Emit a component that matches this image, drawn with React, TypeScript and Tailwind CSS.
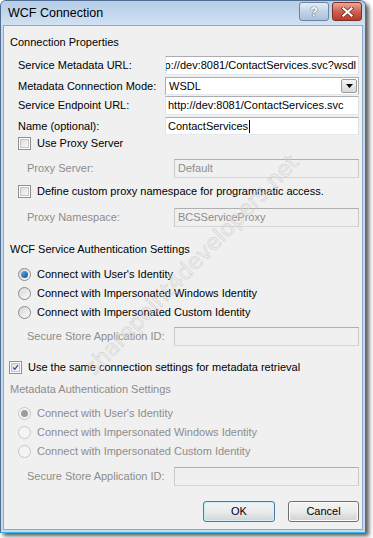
import React from "react";

function Checkbox({ checked = false }: { checked?: boolean }) {
  return (
    <div className="w-[13px] h-[13px] border border-[#8f8f8f] bg-white p-[1px] shrink-0">
      <div className="w-full h-full border border-[#c4c4c4] bg-gradient-to-br from-[#dcdcdc] to-[#fbfbfb] relative">
        {checked && (
          <svg viewBox="0 0 9 9" className="absolute inset-0 w-full h-full">
            <path d="M1.5 4.5 L3.6 6.8 L7.6 1.5" stroke="#2b4fa3" strokeWidth="1.6" fill="none" />
          </svg>
        )}
      </div>
    </div>
  );
}

function Radio({ checked = false, disabled = false }: { checked?: boolean; disabled?: boolean }) {
  return (
    <div
      className={
        "w-[13px] h-[13px] rounded-full border shrink-0 flex items-center justify-center " +
        (disabled ? "border-[#c8c8c8] bg-[#f4f4f4]" : "border-[#8a8a8a] bg-gradient-to-br from-[#d6d6d6] to-[#fcfcfc]")
      }
    >
      {checked && (
        <div
          className={
            "w-[7px] h-[7px] rounded-full " +
            (disabled ? "bg-[#9c9c9c]" : "bg-gradient-to-br from-[#63b6f2] to-[#0d4a8a]")
          }
        />
      )}
    </div>
  );
}

function TextBox({ children, width, height = 19 }: { children?: React.ReactNode; width: number; height?: number }) {
  return (
    <div
      className="bg-white border border-[#abadb3] border-l-[#e2e3ea] border-r-[#dbdfe6] border-b-[#e3e9ef] flex items-center overflow-hidden whitespace-nowrap shrink-0"
      style={{ width, height }}
    >
      {children}
    </div>
  );
}

function DisabledBox({ children, height = 19 }: { children?: React.ReactNode; height?: number }) {
  return (
    <div
      className="w-[185px] bg-[#f0f0f0] border border-[#afafaf] border-l-[#c9c9c9] border-r-[#c9c9c9] border-b-[#d6d6d6] flex items-center pl-[3px] text-[#8d8d8d] overflow-hidden whitespace-nowrap shrink-0"
      style={{ height }}
    >
      {children}
    </div>
  );
}

export default function App() {
  return (
    <div className="w-[373px] h-[538px] bg-white relative overflow-hidden font-['Liberation_Sans',Arial,sans-serif] text-[11px] leading-[13px] text-black">
      <div className="w-[366px] h-[533px] border border-[#4f6e92] border-b-[#33b8e6] rounded-t-[6px] bg-[#c5daef] shadow-[3px_3px_4px_rgba(0,0,0,0.65)] flex flex-col">
        {/* Title bar */}
        <div className="h-[24px] rounded-t-[5px] bg-gradient-to-b from-[#b5cde7] to-[#d0e1f2] flex items-start pl-[7px] pr-[3px] shrink-0">
          <div className="mt-[5px] text-[12.5px] leading-[15px] text-black">WCF Connection</div>
          <div className="ml-auto mt-[1px] flex gap-[3px]">
            <div className="w-[30px] h-[19px] rounded-[3px] border border-[#6d84a2] bg-gradient-to-b from-[#e4edf6] via-[#c3d3e6] to-[#a9c0dc] flex items-center justify-center">
              <span className="text-[13px] leading-[13px] font-bold text-white [text-shadow:0_0_1px_#3a5070,0_0_1px_#3a5070]">?</span>
            </div>
            <div className="w-[30px] h-[19px] rounded-[3px] border border-[#7b3128] bg-gradient-to-b from-[#e8a89a] via-[#cf6150] to-[#b93a26] flex items-center justify-center">
              <svg width="13" height="10" viewBox="0 0 13 10">
                <path d="M2.5 1.5 L10.5 8.5 M10.5 1.5 L2.5 8.5" stroke="#6b2a20" strokeWidth="3.6" strokeLinecap="square" />
                <path d="M2.5 1.5 L10.5 8.5 M10.5 1.5 L2.5 8.5" stroke="#ffffff" strokeWidth="2.2" strokeLinecap="square" />
              </svg>
            </div>
          </div>
        </div>

        {/* Content */}
        <div className="flex-1 mx-[2px] mb-[2px] bg-[#f0f0f0] border border-[#8fa9c6] flex flex-col relative">
          <div className="mt-[9px] h-[14px] leading-[14px] pl-[6px]">Connection Properties</div>

          <div className="mt-[7px] h-[19px] flex items-center pl-[14px]">
            <div className="w-[147px] shrink-0">Service Metadata URL:</div>
            <TextBox width={194}>
              <div className="w-full flex justify-end pr-[2px]">
                <span>http://dev:8081/ContactServices.svc?wsdl</span>
              </div>
            </TextBox>
          </div>

          <div className="mt-[2px] h-[18px] flex items-center pl-[14px]">
            <div className="w-[147px] shrink-0">Metadata Connection Mode:</div>
            <div className="w-[194px] h-[18px] bg-white border border-[#abadb3] border-b-[#e3e9ef] flex items-center pl-[3px] shrink-0">
              <span>WSDL</span>
              <div className="ml-auto mr-[1px] w-[16px] h-[14px] border border-[#9a9a9a] rounded-[2px] bg-gradient-to-b from-[#f6f6f6] to-[#d8d8d8] flex items-center justify-center">
                <svg width="7" height="4" viewBox="0 0 7 4">
                  <path d="M0 0 L7 0 L3.5 4 Z" fill="#000" />
                </svg>
              </div>
            </div>
          </div>

          <div className="mt-[1px] h-[19px] flex items-center pl-[14px]">
            <div className="w-[147px] shrink-0">Service Endpoint URL:</div>
            <TextBox width={194}>
              <span className="pl-[2px]">http://dev:8081/ContactServices.svc</span>
            </TextBox>
          </div>

          <div className="mt-[2px] h-[18px] flex items-center pl-[14px]">
            <div className="w-[147px] shrink-0">Name (optional):</div>
            <TextBox width={194} height={18}>
              <span className="pl-[2px]">ContactServices</span>
              <span className="w-[1px] h-[13px] bg-black ml-[1px]" />
            </TextBox>
          </div>

          <div className="mt-[2px] h-[13px] flex items-center pl-[14px] gap-[6px]">
            <Checkbox />
            <span>Use Proxy Server</span>
          </div>

          <div className="mt-[9px] h-[19px] flex items-center pl-[23px] text-[#8d8d8d]">
            <div className="w-[147px] shrink-0">Proxy Server:</div>
            <DisabledBox>Default</DisabledBox>
          </div>

          <div className="mt-[7px] h-[13px] flex items-center pl-[14px] gap-[6px]">
            <Checkbox />
            <span>Define custom proxy namespace for programmatic access.</span>
          </div>

          <div className="mt-[10px] h-[19px] flex items-center pl-[23px] text-[#8d8d8d]">
            <div className="w-[147px] shrink-0">Proxy Namespace:</div>
            <DisabledBox>BCSServiceProxy</DisabledBox>
          </div>

          <div className="mt-[15px] h-[14px] leading-[14px] pl-[6px]">WCF Service Authentication Settings</div>

          <div className="mt-[12px] h-[13px] flex items-center pl-[14px] gap-[6px]">
            <Radio checked />
            <span>Connect with User's Identity</span>
          </div>
          <div className="mt-[6px] h-[13px] flex items-center pl-[14px] gap-[6px]">
            <Radio />
            <span>Connect with Impersonated Windows Identity</span>
          </div>
          <div className="mt-[6px] h-[13px] flex items-center pl-[14px] gap-[6px]">
            <Radio />
            <span>Connect with Impersonated Custom Identity</span>
          </div>

          <div className="mt-[8px] h-[19px] flex items-center pl-[23px] text-[#8d8d8d]">
            <div className="w-[147px] shrink-0">Secure Store Application ID:</div>
            <DisabledBox />
          </div>

          <div className="mt-[15px] h-[13px] flex items-center pl-[5px] gap-[6px]">
            <Checkbox checked />
            <span>Use the same connection settings for metadata retrieval</span>
          </div>

          <div className="mt-[8px] h-[14px] leading-[14px] pl-[6px] text-[#8d8d8d]">Metadata Authentication Settings</div>

          <div className="mt-[11px] h-[13px] flex items-center pl-[14px] gap-[6px] text-[#8d8d8d]">
            <Radio checked disabled />
            <span>Connect with User's Identity</span>
          </div>
          <div className="mt-[6px] h-[13px] flex items-center pl-[14px] gap-[6px] text-[#8d8d8d]">
            <Radio disabled />
            <span>Connect with Impersonated Windows Identity</span>
          </div>
          <div className="mt-[6px] h-[13px] flex items-center pl-[14px] gap-[6px] text-[#8d8d8d]">
            <Radio disabled />
            <span>Connect with Impersonated Custom Identity</span>
          </div>

          <div className="mt-[9px] h-[19px] flex items-center pl-[23px] text-[#8d8d8d]">
            <div className="w-[147px] shrink-0">Secure Store Application ID:</div>
            <DisabledBox />
          </div>

          <div className="mt-[15px] h-[21px] flex justify-end pr-[3px] gap-[13px]">
            <div className="w-[72px] h-[21px] rounded-[3px] border border-[#3c7fb1] p-[1px] bg-[#cdeefb]">
              <div className="w-full h-full rounded-[2px] bg-gradient-to-b from-[#f2f2f2] via-[#ebebeb] to-[#d6d6d6] flex items-center justify-center">
                OK
              </div>
            </div>
            <div className="w-[71px] h-[21px] rounded-[3px] border border-[#707070] p-[1px] bg-[#fbfbfb]">
              <div className="w-full h-full rounded-[2px] bg-gradient-to-b from-[#f2f2f2] via-[#ebebeb] to-[#d3d3d3] flex items-center justify-center">
                Cancel
              </div>
            </div>
          </div>

          {/* Watermark */}
          <div className="absolute left-[28px] top-[226px] w-[320px] text-center pointer-events-none -rotate-[46deg] text-[22px] leading-[26px] text-transparent [-webkit-text-stroke:0.6px_#d2d2d2] font-['DejaVu_Sans',sans-serif]">
            sharepoint4developers.net
          </div>
        </div>
      </div>
    </div>
  );
}
